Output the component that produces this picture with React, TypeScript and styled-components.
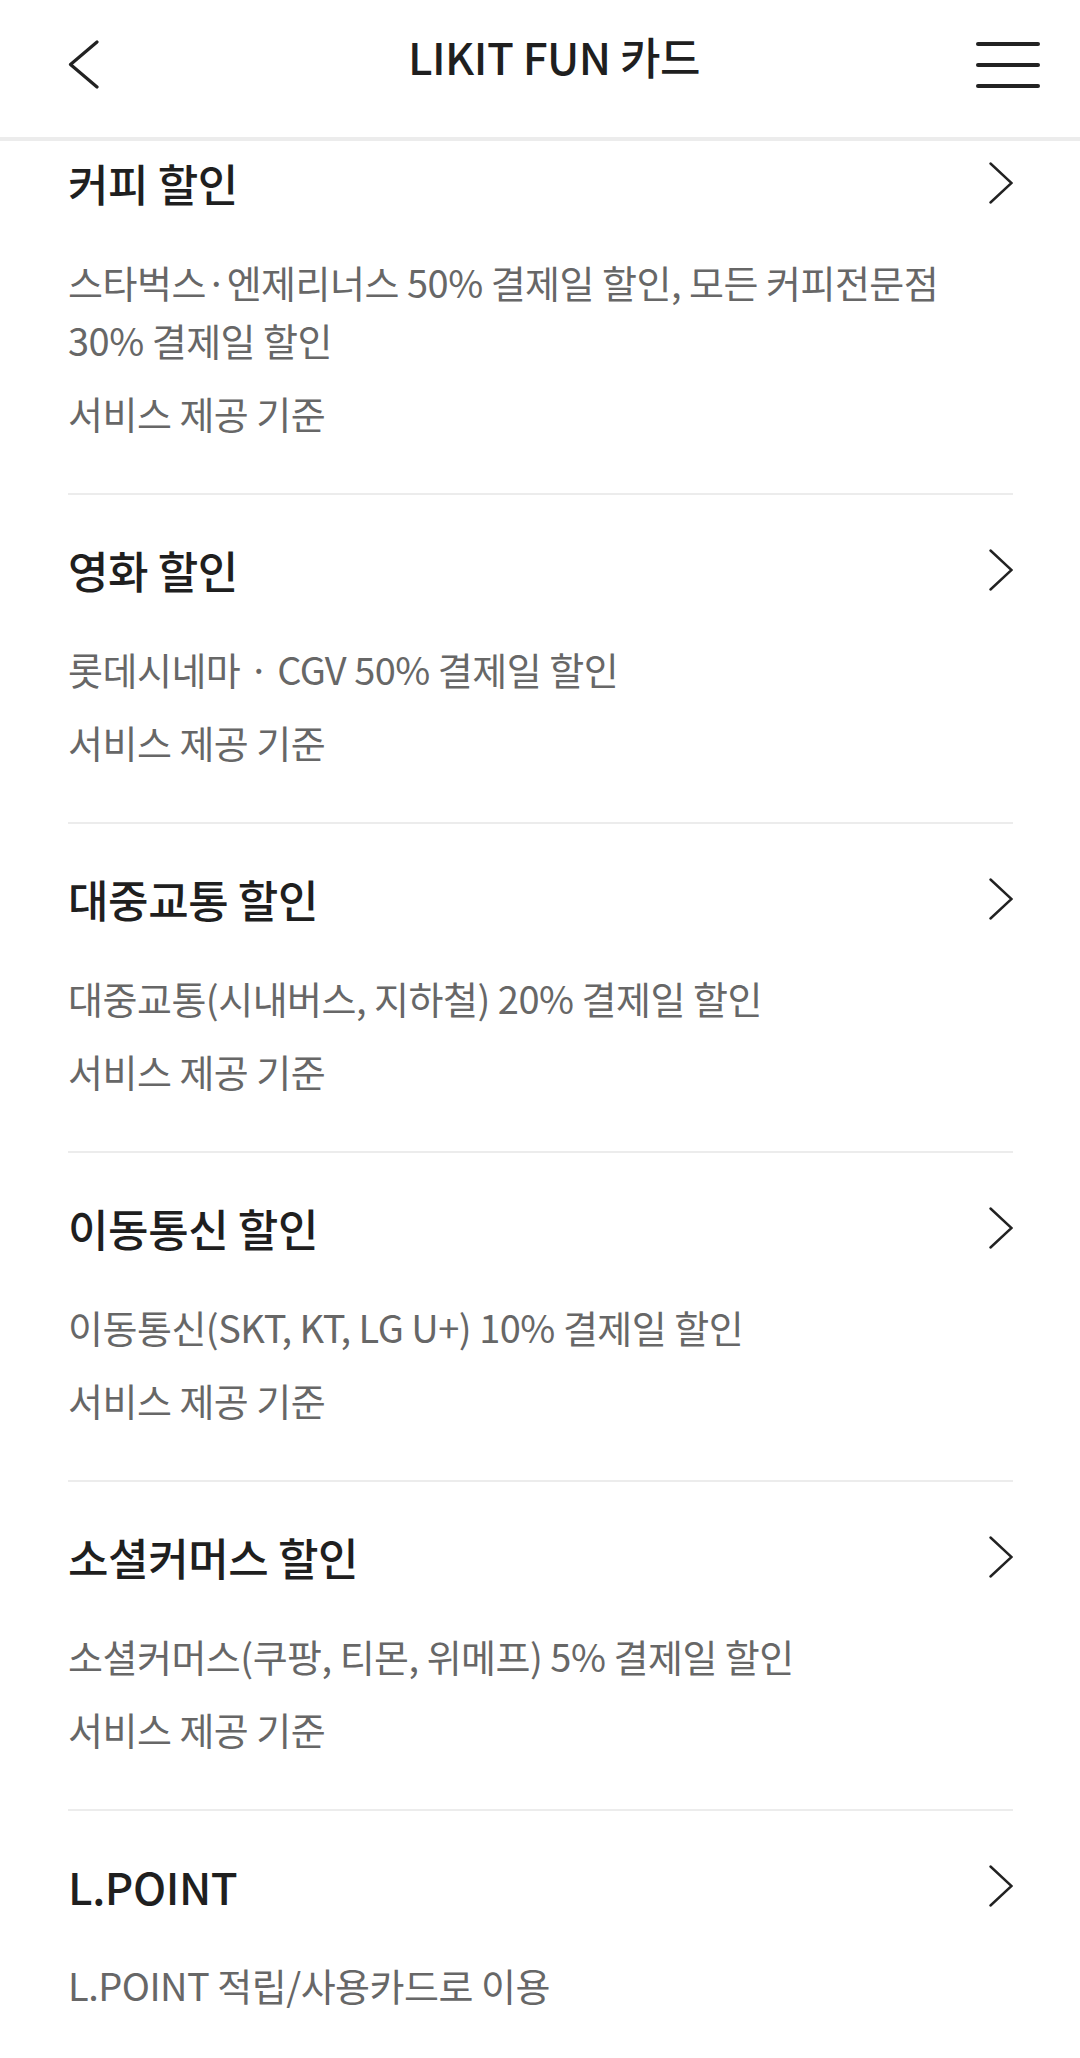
import styled, { createGlobalStyle } from "styled-components";

const GlobalStyle = createGlobalStyle`
    html, body {
        margin: 0;
        padding: 0;
        background: #ffffff;
    }
    body {
        font-family: "Noto Sans CJK KR", "Noto Sans", sans-serif;
        color: #1f1f1f;
        -webkit-font-smoothing: antialiased;
    }
`;

const Page = styled.div`
    width: 1080px;
    background: #fff;
`;

const Header = styled.header`
    display: grid;
    grid-template-columns: 1fr auto 1fr;
    align-items: center;
    box-sizing: content-box;
    height: 129px;
    padding: 0 40px 8px 68px;
    border-bottom: 4px solid #ececec;
`;

const IconButton = styled.button<{ $align: "start" | "end" }>`
    justify-self: ${props => props.$align};
    display: flex;
    padding: 0;
    border: 0;
    background: none;
    color: #222;
    svg {
        display: block;
    }
`;

const Title = styled.h1`
    margin: 0 0 18px;
    font-size: 44px;
    font-weight: 500;
    line-height: 1;
    letter-spacing: -0.5px;
    color: #1f1f1f;
`;

const List = styled.ul`
    list-style: none;
    margin: 0;
    padding: 0;
`;

const Item = styled.li<{ $first?: boolean }>`
    margin: 0 67px 0 68px;
    padding: ${props => (props.$first ? "14px" : "47px")} 0 51px;
    border-bottom: 2px solid #ececec;
    &:last-child {
        border-bottom: 0;
    }
`;

const TitleRow = styled.div`
    display: flex;
    align-items: center;
    justify-content: space-between;
`;

const ItemTitle = styled.h2`
    margin: 0;
    font-size: 44px;
    font-weight: 500;
    line-height: 56px;
    letter-spacing: -0.4px;
    color: #1f1f1f;
`;

const Desc = styled.p<{ $sub?: boolean }>`
    margin: ${props => (props.$sub ? "15px" : "42px")} 0 0;
    font-size: 38px;
    font-weight: 400;
    line-height: 58px;
    letter-spacing: -0.5px;
    color: #676767;
`;

const BackIcon = () => (
    <svg width="32" height="50" viewBox="0 0 32 50" fill="none">
        <polyline points="29,2 2.5,24.5 29,47" stroke="currentColor" strokeWidth="3.2" strokeLinecap="round" strokeLinejoin="round" />
    </svg>
);

const MenuIcon = () => (
    <svg width="64" height="50" viewBox="0 0 64 50" fill="none">
        <line x1="2" y1="4" x2="62" y2="4" stroke="currentColor" strokeWidth="4" strokeLinecap="round" />
        <line x1="2" y1="25" x2="62" y2="25" stroke="currentColor" strokeWidth="4" strokeLinecap="round" />
        <line x1="2" y1="46" x2="62" y2="46" stroke="currentColor" strokeWidth="4" strokeLinecap="round" />
    </svg>
);

const ArrowIcon = () => (
    <svg width="24" height="44" viewBox="0 0 24 44" fill="none">
        <polyline points="1.5,2.5 22.5,22 1.5,41.5" stroke="#222" strokeWidth="2.4" strokeLinecap="round" strokeLinejoin="miter" />
    </svg>
);

type Benefit = {
    title: string;
    lines: string[];
    sub?: string;
};

const benefits: Benefit[] = [
    {
        title: "커피 할인",
        lines: ["스타벅스·엔제리너스 50% 결제일 할인, 모든 커피전문점", "30% 결제일 할인"],
        sub: "서비스 제공 기준",
    },
    {
        title: "영화 할인",
        lines: ["롯데시네마 · CGV 50% 결제일 할인"],
        sub: "서비스 제공 기준",
    },
    {
        title: "대중교통 할인",
        lines: ["대중교통(시내버스, 지하철) 20% 결제일 할인"],
        sub: "서비스 제공 기준",
    },
    {
        title: "이동통신 할인",
        lines: ["이동통신(SKT, KT, LG U+) 10% 결제일 할인"],
        sub: "서비스 제공 기준",
    },
    {
        title: "소셜커머스 할인",
        lines: ["소셜커머스(쿠팡, 티몬, 위메프) 5% 결제일 할인"],
        sub: "서비스 제공 기준",
    },
    {
        title: "L.POINT",
        lines: ["L.POINT 적립/사용카드로 이용"],
    },
];

function App() {
    return (<>
        <GlobalStyle />
        <Page>
            <Header>
                <IconButton $align="start" aria-label="뒤로">
                    <BackIcon />
                </IconButton>
                <Title>LIKIT FUN 카드</Title>
                <IconButton $align="end" aria-label="메뉴">
                    <MenuIcon />
                </IconButton>
            </Header>
            <List>
                {benefits.map((b, i) => (
                    <Item key={b.title} $first={i === 0}>
                        <TitleRow>
                            <ItemTitle>{b.title}</ItemTitle>
                            <ArrowIcon />
                        </TitleRow>
                        <Desc>
                            {b.lines.map((line, j) => (
                                <span key={j}>
                                    {j > 0 && <br />}
                                    {line}
                                </span>
                            ))}
                        </Desc>
                        {b.sub && <Desc $sub>{b.sub}</Desc>}
                    </Item>
                ))}
            </List>
        </Page>
    </>);
}

export default App;
